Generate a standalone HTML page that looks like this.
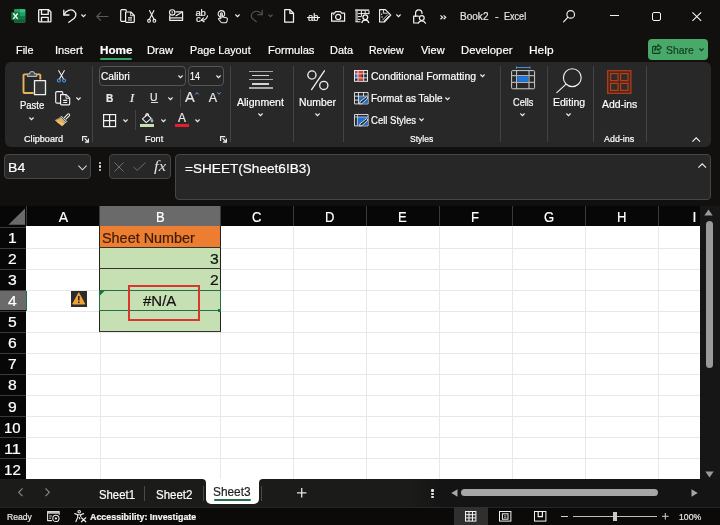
<!DOCTYPE html>
<html lang="en"><head><meta charset="utf-8"><title>Book2 - Excel</title>
<style>
html,body{margin:0;padding:0;background:#12100e;}
body{width:720px;height:525px;overflow:hidden;font-family:"Liberation Sans",sans-serif;}
#app{will-change:transform;position:relative;width:720px;height:525px;overflow:hidden;background:#12100e;}
.t{position:absolute;white-space:pre;-webkit-text-stroke:0.2px currentColor;line-height:1;transform-origin:0 0;display:inline-block;}
.a{position:absolute;}
svg{position:absolute;overflow:visible;}
.sep{position:absolute;width:1px;background:#444;top:66px;height:76px;}
.chev{position:absolute;}
.gl-h{position:absolute;left:26px;width:674px;height:1px;background:#e8e8e8;}
.gl-v{position:absolute;top:226.4px;width:1px;height:253px;background:#e8e8e8;}
.rh{position:absolute;left:0;width:26px;height:1px;background:#3a3a3a;}
.chs{position:absolute;top:206px;width:1px;height:20px;background:#3a3a3a;}
.sf{font-family:"Liberation Serif",serif;}

</style></head>
<body>
<div id="app">
<!-- ribbon panel -->
<div class="a" style="left:4.5px;top:61.9px;width:706.5px;height:85.5px;background:#282828;border-radius:6px;"></div>
<!-- Home underline -->
<div class="a" style="left:100px;top:58px;width:32px;height:2px;background:#2fa866;border-radius:1px;"></div>
<!-- Share button -->
<div class="a" style="left:648px;top:39px;width:59.5px;height:21px;background:#49a968;border-radius:4px;"></div>
<!-- group separators -->
<div class="sep" style="left:92px"></div>
<div class="sep" style="left:230px"></div>
<div class="sep" style="left:292.5px"></div>
<div class="sep" style="left:343px"></div>
<div class="sep" style="left:500px"></div>
<div class="sep" style="left:546.5px"></div>
<div class="sep" style="left:592.5px"></div>
<div class="sep" style="left:645.5px"></div>
<!-- font boxes -->
<div class="a" style="left:99.2px;top:65.8px;width:86.4px;height:20.2px;border:1px solid #555;border-radius:4px;box-sizing:border-box;background:#262626"></div>
<div class="a" style="left:187.6px;top:65.8px;width:36.6px;height:20.2px;border:1px solid #555;border-radius:4px;box-sizing:border-box;background:#262626"></div>
<!-- small separators in font group -->
<div class="a" style="left:179.5px;top:89px;width:1px;height:18px;background:#444"></div>
<div class="a" style="left:134.5px;top:110px;width:1px;height:20px;background:#444"></div>
<!-- U underline -->
<div class="a" style="left:150.6px;top:102.2px;width:7px;height:1px;background:#e0e0e0"></div>
<!-- fill color bar / font color bar -->
<div class="a" style="left:140px;top:123.5px;width:14.3px;height:3.5px;background:#c6e0b4"></div>
<div class="a" style="left:175.3px;top:123.5px;width:14px;height:3.5px;background:#e3202a"></div>

<!-- formula bar -->
<div class="a" style="left:4px;top:154px;width:87px;height:25px;border:1px solid #464646;border-radius:4px;box-sizing:border-box;background:#272727"></div>
<div class="a" style="left:108.5px;top:154px;width:62.5px;height:25px;border:1px solid #464646;border-radius:4px;box-sizing:border-box;background:#272727"></div>
<div class="a" style="left:174.5px;top:154px;width:536.5px;height:45.5px;border:1px solid #464646;border-radius:4px;box-sizing:border-box;background:#272727"></div>

<!-- grid -->
<div class="a" style="left:0;top:206px;width:700px;height:273.4px;background:#070707"></div>
<div class="a" style="left:26px;top:226.4px;width:674px;height:253px;background:#fff"></div>
<!-- selected col header B -->
<div class="a" style="left:99.5px;top:206px;width:121px;height:20.4px;background:#6a6a6a"></div>
<!-- selected row header 4 -->
<div class="a" style="left:0;top:289.8px;width:26px;height:20.6px;background:#6a6a6a"></div><div class="a" style="left:25.5px;top:289.6px;width:1px;height:21px;background:#1e7145"></div>
<div class="gl-h" style="top:247.67px"></div>
<div class="gl-h" style="top:268.74px"></div>
<div class="gl-h" style="top:289.81px"></div>
<div class="gl-h" style="top:310.88px"></div>
<div class="gl-h" style="top:331.95px"></div>
<div class="gl-h" style="top:353.02px"></div>
<div class="gl-h" style="top:374.09px"></div>
<div class="gl-h" style="top:395.16px"></div>
<div class="gl-h" style="top:416.23px"></div>
<div class="gl-h" style="top:437.30px"></div>
<div class="gl-h" style="top:458.37px"></div>
<div class="gl-v" style="left:99.5px"></div>
<div class="gl-v" style="left:220px"></div>
<div class="gl-v" style="left:293px"></div>
<div class="gl-v" style="left:366px"></div>
<div class="gl-v" style="left:439px"></div>
<div class="gl-v" style="left:512px"></div>
<div class="gl-v" style="left:585px"></div>
<div class="gl-v" style="left:658px"></div>
<div class="rh" style="top:226.60px"></div>
<div class="rh" style="top:247.67px"></div>
<div class="rh" style="top:268.74px"></div>
<div class="rh" style="top:289.81px"></div>
<div class="rh" style="top:310.88px"></div>
<div class="rh" style="top:331.95px"></div>
<div class="rh" style="top:353.02px"></div>
<div class="rh" style="top:374.09px"></div>
<div class="rh" style="top:395.16px"></div>
<div class="rh" style="top:416.23px"></div>
<div class="rh" style="top:437.30px"></div>
<div class="rh" style="top:458.37px"></div>
<div class="rh" style="top:479.44px"></div>
<div class="chs" style="left:26px"></div>
<div class="chs" style="left:99px"></div>
<div class="chs" style="left:220px"></div>
<div class="chs" style="left:293px"></div>
<div class="chs" style="left:366px"></div>
<div class="chs" style="left:439px"></div>
<div class="chs" style="left:512px"></div>
<div class="chs" style="left:585px"></div>
<div class="chs" style="left:658px"></div>
<!-- cells -->
<div class="a" style="left:99.5px;top:226.4px;width:121px;height:21.2px;background:#ed7d31"></div>
<div class="a" style="left:99.5px;top:247.5px;width:121px;height:84.3px;background:#c6e0b4"></div>
<div class="a" style="left:99px;top:226.4px;width:1px;height:105.6px;background:#222"></div>
<div class="a" style="left:220px;top:226.4px;width:1px;height:105.6px;background:#222"></div>
<div class="a" style="left:99px;top:247.2px;width:122px;height:1px;background:#333"></div>
<div class="a" style="left:99px;top:268.2px;width:122px;height:1px;background:#333"></div>
<div class="a" style="left:99px;top:331.3px;width:122px;height:1px;background:#333"></div>
<!-- selection border B4 -->
<div class="a" style="left:99px;top:289.6px;width:122px;height:21.6px;border:1px solid #1e7145;box-sizing:border-box"></div>
<div class="a" style="left:218.3px;top:309px;width:3.2px;height:3.4px;background:#1e7145"></div>
<svg style="left:100px;top:291px" width="5" height="5" viewBox="0 0 5 5"><path d="M0 0H4.5L0 4.5Z" fill="#1e7145"/></svg>
<!-- red highlight rect -->
<div class="a" style="left:127.5px;top:285.4px;width:72.5px;height:35.2px;border:2.5px solid #d9362e;box-sizing:border-box"></div>
<!-- warning icon -->
<div class="a" style="left:70.5px;top:290.5px;width:16.5px;height:16.5px;background:#2c2c2c"></div>
<svg style="left:72px;top:292px" width="13.5" height="13" viewBox="0 0 27 26"><path d="M13.5 1.5L25.5 24H1.5Z" fill="#f0a33a" stroke="#f0a33a" stroke-width="2" stroke-linejoin="round"/><rect x="12" y="8" width="3.2" height="9" fill="#2c2c2c"/><rect x="12" y="19" width="3.2" height="3.2" fill="#2c2c2c"/></svg>
<!-- select-all triangle -->
<svg style="left:7.6px;top:207.8px" width="18" height="18" viewBox="0 0 18 18"><path d="M17 0.6V16.8H0.4Z" fill="#6a6a6a"/></svg>

<!-- vertical scrollbar -->
<div class="a" style="left:700px;top:206px;width:20px;height:273.4px;background:#161616"></div>
<div class="a" style="left:705.5px;top:220.6px;width:7.2px;height:147px;background:#9a9a9a;border-radius:3.6px"></div>
<svg style="left:704.4px;top:209.4px" width="9" height="7" viewBox="0 0 9 7"><path d="M4.5 0.5L8.7 6.5H0.3Z" fill="#9a9a9a"/></svg>
<svg style="left:704.8px;top:470.5px" width="9" height="7" viewBox="0 0 9 7"><path d="M4.5 6.5L8.7 0.5H0.3Z" fill="#9a9a9a"/></svg>

<!-- sheet tab bar -->
<div class="a" style="left:202.3px;top:479px;width:60.9px;height:6px;background:#fff"></div>
<div class="a" style="left:0;top:479.3px;width:206.3px;height:28px;background:#1b1c19;border-radius:0 4px 0 0"></div>
<div class="a" style="left:259.2px;top:479.3px;width:460.8px;height:28px;background:#1b1c19;border-radius:4px 0 0 0"></div>
<div class="a" style="left:200px;top:490px;width:66px;height:17.5px;background:#1b1c19"></div>
<div class="a" style="left:206.3px;top:479px;width:52.9px;height:25px;background:#fff;border-radius:0 0 5px 5px"></div>
<div class="a" style="left:214.2px;top:499.3px;width:36.6px;height:2px;background:#217346;border-radius:1px"></div>
<div class="a" style="left:144.2px;top:485.5px;width:1px;height:15px;background:#4a4a4a"></div>
<div class="a" style="left:203px;top:485.5px;width:1px;height:15px;background:#4a4a4a"></div>
<div class="a" style="left:261px;top:485.5px;width:1px;height:15px;background:#4a4a4a"></div>
<!-- hscroll -->
<div class="a" style="left:410px;top:479.3px;width:310px;height:28px;background:linear-gradient(90deg,#1b1c19 0,#141414 30px,#141414 100%)"></div>
<div class="a" style="left:460.8px;top:489.2px;width:197px;height:7px;background:#a6a6a6;border-radius:3.5px"></div>
<svg style="left:450.5px;top:489px" width="7" height="8" viewBox="0 0 7 8"><path d="M0.3 4L6.5 0.3V7.7Z" fill="#a6a6a6"/></svg>
<svg style="left:691px;top:489px" width="7" height="8" viewBox="0 0 7 8"><path d="M6.7 4L0.5 0.3V7.7Z" fill="#a6a6a6"/></svg>
<!-- status bar -->
<div class="a" style="left:0;top:507px;width:720px;height:18px;background:#0b0a09;border-top:1px solid #262626;box-sizing:border-box"></div>
<div class="a" style="left:453.8px;top:507px;width:34.2px;height:18px;background:#2f2f2f"></div>
<div class="a" style="left:573px;top:516.3px;width:84px;height:1px;background:#bdbdbd"></div>
<div class="a" style="left:613px;top:511.7px;width:4px;height:9.5px;background:#c8c8c8"></div>
<!-- ===== title bar icons ===== -->
<!-- excel logo -->
<svg style="left:10.8px;top:9.2px" width="15" height="13.7" viewBox="0 0 30 27.4">
 <path d="M8.4 0H26.8a1.8 1.8 0 0 1 1.8 1.8V25.6a1.8 1.8 0 0 1-1.8 1.8H8.4a1.8 1.8 0 0 1-1.8-1.8V1.8A1.8 1.8 0 0 1 8.4 0Z" fill="#1d9a58"/>
 <rect x="6.6" y="0.4" width="11" height="6.6" fill="#21a366"/><rect x="17.6" y="0.4" width="11" height="6.6" fill="#33c481" rx="1"/>
 <rect x="6.6" y="7" width="11" height="6.8" fill="#107c41"/><rect x="17.6" y="7" width="11" height="6.8" fill="#21a366"/>
 <rect x="6.6" y="13.8" width="11" height="6.8" fill="#185c37"/><rect x="17.6" y="13.8" width="11" height="6.8" fill="#107c41"/>
 <rect x="6.6" y="20.6" width="22" height="6.4" fill="#185c37" rx="1"/>
 <rect x="0.6" y="6" width="16.8" height="16.4" rx="1.6" fill="#107c41"/>
 <path d="M4.6 8.8L13.4 19.8M13.4 8.8L4.6 19.8" stroke="#fff" stroke-width="2.7"/>
</svg>
<!-- save -->
<svg style="left:38.3px;top:8.9px" width="13.6" height="13.6" viewBox="0 0 13.6 13.6" fill="none" stroke="#f2f2f2" stroke-width="1.35" stroke-linejoin="round">
 <path d="M1.4 0.7H10.6L12.9 3V12.2a0.7 0.7 0 0 1-0.7 0.7H1.4a0.7 0.7 0 0 1-0.7-0.7V1.4a0.7 0.7 0 0 1 0.7-0.7Z"/>
 <path d="M3.5 0.9V5.4H10.2V0.9"/><path d="M3.5 12.8V8.4H10.2V12.8"/>
</svg>
<!-- undo -->
<svg style="left:63.4px;top:9px" width="14" height="14" viewBox="0 0 14 14" fill="none" stroke="#f2f2f2" stroke-width="1.3" stroke-linecap="round" stroke-linejoin="round">
 <path d="M0.8 1.1V6H6"/><path d="M1 5.8C3 1.6 7.8 -0.4 10.9 2 13.9 4.4 13 7.6 11 9.4L5.8 13.3"/>
</svg>
<svg class="chev" style="left:81.2px;top:14.2px" width="5" height="3.4" viewBox="0 0 5 3.4" fill="none" stroke="#f2f2f2" stroke-width="1.1"><path d="M0.4 0.5L2.5 2.7L4.6 0.5"/></svg>
<!-- back arrow (disabled) -->
<svg style="left:95.8px;top:11.5px" width="12.6" height="9" viewBox="0 0 12.6 9" fill="none" stroke="#5a5a5a" stroke-width="1.1" stroke-linecap="round" stroke-linejoin="round"><path d="M12 4.5H0.8M4.6 0.7L0.8 4.5L4.6 8.3"/></svg>
<!-- copy -->
<svg style="left:119.6px;top:8.6px" width="15" height="14" viewBox="0 0 15 14" fill="none" stroke="#f2f2f2" stroke-width="1.2" stroke-linejoin="round">
 <path d="M5.2 12.4H1.9A1.2 1.2 0 0 1 0.7 11.2V1.9A1.2 1.2 0 0 1 1.9 0.7H5.2A1.2 1.2 0 0 1 6.4 1.9V2.6"/>
 <path d="M5.6 3H10.8L14.3 6.5V12.6a0.8 0.8 0 0 1-0.8 0.8H6.4a0.8 0.8 0 0 1-0.8-0.8Z"/>
 <path d="M10.6 3.2V6.7H14.1" stroke-width="0.9"/>
 <path d="M8 8.8H12M8 11H12"/>
</svg>
<!-- scissors -->
<svg style="left:146.8px;top:10px" width="9.4" height="12.6" viewBox="0 0 9.4 12.6" fill="none" stroke="#f2f2f2" stroke-width="1.1" stroke-linecap="round">
 <path d="M2.5 0.6L7.1 9.4M6.9 0.6L2.3 9.4"/><circle cx="2" cy="10.8" r="1.4"/><circle cx="7.4" cy="10.8" r="1.4"/>
</svg>
<!-- email -->
<svg style="left:168.9px;top:9px" width="14.2" height="12" viewBox="0 0 14.2 12" fill="none" stroke="#f2f2f2" stroke-width="1.2" stroke-linejoin="round">
 <path d="M0.7 6.2V11.3H13.6V2.8H6.4"/><path d="M6.6 7L13.4 3"/><path d="M0.9 8.9H13.4"/>
 <circle cx="3.2" cy="3.4" r="2.7" stroke-width="1.1"/><path d="M3.2 2.2V4.4" stroke-width="1"/>
</svg>
<!-- abc spelling -->
<svg style="left:195.8px;top:10.3px" width="12" height="12.4" viewBox="0 0 12 12.4" fill="none" stroke="#f2f2f2" stroke-width="1.1" stroke-linecap="round" stroke-linejoin="round">
 <path d="M11.5 5.8C10.8 8.6 8.8 10.3 5.4 10.1"/><path d="M7.6 7.8L5.2 10.1L8.2 11.7"/>
</svg>
<span class="t" style="left:195.5px;top:7.9px;font-size:9.6px;color:#f2f2f2;letter-spacing:-0.3px">ab</span>
<span class="t" style="left:195.9px;top:14.1px;font-size:9.6px;color:#f2f2f2">c</span>
<!-- touch -->
<svg style="left:216.5px;top:9.6px" width="11.2" height="13.4" viewBox="0 0 11.2 13.4" fill="none" stroke="#f2f2f2" stroke-width="1.05" stroke-linecap="round" stroke-linejoin="round">
 <circle cx="4.4" cy="3.9" r="3.3"/>
 <path d="M3.4 8.8V3.7a1 1 0 0 1 2 0V6.9L9.4 7.8a1.3 1.3 0 0 1 1 1.5L9.9 11.6a1.6 1.6 0 0 1-1.6 1.2H5.4a2 2 0 0 1-1.6-.8L1.6 9.3c-.5-.8.6-1.5 1.2-.9Z" fill="#12100e"/><rect x="3.7" y="3.4" width="1.4" height="5" fill="#b0b0b0" stroke="none"/>
</svg>
<svg class="chev" style="left:234.7px;top:14.2px" width="5" height="3.4" viewBox="0 0 5 3.4" fill="none" stroke="#f2f2f2" stroke-width="1.1"><path d="M0.4 0.5L2.5 2.7L4.6 0.5"/></svg>
<!-- redo disabled -->
<svg style="left:250px;top:9.2px" width="13" height="13.4" viewBox="0 0 13 13.4" fill="none" stroke="#555" stroke-width="1.1" stroke-linecap="round" stroke-linejoin="round">
 <path d="M12.2 1V5.8H7.4"/><path d="M12 5.7C9.9 2.6 6.3 1.4 3.5 3.1 0.9 4.8 0.7 7.8 2.5 9.7L6.3 12.8"/>
</svg>
<svg class="chev" style="left:267.5px;top:14.2px" width="5" height="3.4" viewBox="0 0 5 3.4" fill="none" stroke="#555" stroke-width="1.1"><path d="M0.4 0.5L2.5 2.7L4.6 0.5"/></svg>
<!-- new doc -->
<svg style="left:283.8px;top:9px" width="10.2" height="14" viewBox="0 0 10.2 14" fill="none" stroke="#f2f2f2" stroke-width="1.25" stroke-linejoin="round">
 <path d="M0.7 0.7H6L9.5 4.2V13.2H0.7Z"/><path d="M5.9 0.9V4.4H9.4"/>
</svg>
<!-- strikethrough ab -->
<div class="a" style="left:306.7px;top:16.8px;width:13.4px;height:1.15px;background:#f2f2f2"></div>
<!-- camera -->
<svg style="left:330.8px;top:10.5px" width="14.2" height="10.8" viewBox="0 0 14.2 10.8" fill="none" stroke="#f2f2f2" stroke-width="1.2" stroke-linejoin="round">
 <path d="M0.6 2.2H3.6L4.7 0.6H9.5L10.6 2.2H13.6V10.2H0.6Z"/><circle cx="7.2" cy="5.9" r="2.6"/><circle cx="2.8" cy="3.6" r="0.4" fill="#f2f2f2" stroke-width="0.5"/>
</svg>
<!-- table + person -->
<svg style="left:355px;top:9px" width="14.6" height="14.2" viewBox="0 0 14.6 14.2" fill="none" stroke="#f2f2f2" stroke-width="1.05" stroke-linejoin="round">
 <rect x="0.3" y="0.3" width="2.5" height="12.6" fill="#9a9a9a" stroke="none"/>
 <rect x="0.3" y="0.3" width="13.9" height="1.7" fill="#c8c8c8" stroke="none"/>
 <path d="M2.8 4.6H14M2.8 7.6H6.4M2.8 10.4H5.6M6.4 2V7.6M10.2 2V4.6M14 2V5.2" stroke-width="1"/>
 <path d="M0.5 12.8H5.4" stroke-width="1"/>
 <circle cx="10.3" cy="8.3" r="2.4" stroke-width="1.25"/><path d="M6.7 14C7.2 11.9 8.5 11.1 10.3 11.1 12.1 11.1 13.4 11.9 13.9 14" stroke-width="1.25"/>
</svg>
<!-- page arrow -->
<svg style="left:379px;top:9.3px" width="12.4" height="13.6" viewBox="0 0 12.4 13.6" fill="none" stroke="#f2f2f2" stroke-width="1.15" stroke-linejoin="round">
 <path d="M0.6 0.6H6.4L11.8 6.2L5.4 13H0.6Z"/><path d="M4.4 0.8V4.2H8.6" stroke-width="0.9"/><path d="M10.4 6.6L4.6 12.4M9.2 5.4L3.4 11.2" stroke-width="0.9"/><path d="M2.6 5.2h.1M3 8h.1" stroke-width="1.3" stroke-linecap="round"/>
</svg>
<svg class="chev" style="left:396.3px;top:14.2px" width="5" height="3.4" viewBox="0 0 5 3.4" fill="none" stroke="#f2f2f2" stroke-width="1.1"><path d="M0.4 0.5L2.5 2.7L4.6 0.5"/></svg>
<!-- lock + person -->
<svg style="left:412.6px;top:8.6px" width="13.4" height="14.8" viewBox="0 0 13.4 14.8" fill="none" stroke="#f2f2f2" stroke-width="1.2" stroke-linejoin="round" stroke-linecap="round">
 <path d="M2.6 7.2V4a3.2 3.2 0 0 1 6.4 0V4.4"/><path d="M4.8 14H0.7V7.2H5.4"/>
 <circle cx="8.8" cy="9.1" r="2.4"/><path d="M5.4 14.2C5.9 12.4 7.1 11.8 8.8 11.8 10.5 11.8 11.7 12.4 12.5 14.2"/>
</svg>
<!-- >> -->
<svg style="left:440px;top:14.6px" width="6.4" height="4.6" viewBox="0 0 6.4 4.6" fill="none" stroke="#ececec" stroke-width="1.2"><path d="M0.5 0.4L2.6 2.3L0.5 4.2M3.6 0.4L5.7 2.3L3.6 4.2"/></svg>
<!-- search -->
<svg style="left:562.6px;top:9.8px" width="12" height="12.2" viewBox="0 0 12 12.2" fill="none" stroke="#f2f2f2" stroke-width="1.15" stroke-linecap="round"><circle cx="7.7" cy="4.4" r="3.8"/><path d="M5 7.2L0.6 11.8"/></svg>
<!-- window controls -->
<div class="a" style="left:610.4px;top:14.9px;width:9px;height:1.1px;background:#f2f2f2"></div>
<div class="a" style="left:651.5px;top:12px;width:9.4px;height:9.2px;border:1.1px solid #f2f2f2;border-radius:2px;box-sizing:border-box"></div>
<svg style="left:692.2px;top:12px" width="9.6" height="9.2" viewBox="0 0 9.6 9.2" fill="none" stroke="#f2f2f2" stroke-width="1.1"><path d="M0.4 0.4L9.2 8.8M9.2 0.4L0.4 8.8"/></svg>

<!-- share icon -->
<svg style="left:652px;top:44.4px" width="10" height="10" viewBox="0 0 10 10" fill="none" stroke="#0f3d20" stroke-width="1.1" stroke-linejoin="round" stroke-linecap="round">
 <path d="M3.4 2.4H1.6A1 1 0 0 0 0.6 3.4V8.4A1 1 0 0 0 1.6 9.4H7A1 1 0 0 0 8 8.4V7.6"/>
 <path d="M6 0.6L9.4 3.6L6 6.6V4.8C4.4 4.8 3.4 5.4 2.8 6.6 2.8 4.2 4 2.6 6 2.4Z"/>
</svg>
<svg class="chev" style="left:698.7px;top:47.9px" width="5" height="3.4" viewBox="0 0 5 3.4" fill="none" stroke="#0f3d20" stroke-width="1.1"><path d="M0.4 0.5L2.5 2.7L4.6 0.5"/></svg>

<!-- ===== ribbon icons ===== -->
<!-- paste -->
<svg style="left:22px;top:69px" width="25" height="27" viewBox="0 0 25 27" fill="none" stroke-linejoin="round">
 <path d="M11.6 24H2.4A0.9 0.9 0 0 1 1.5 23.1V6.3A0.9 0.9 0 0 1 2.4 5.4H17.4A0.9 0.9 0 0 1 18.3 6.3V10.6" stroke="#e8b35a" stroke-width="1.9"/>
 <path d="M5.6 7.4V5H7.6A2.5 2.5 0 0 1 12.6 5H14.6V7.4Z" fill="#4a4a4a" stroke="#b4b4b4" stroke-width="1.1"/>
 <rect x="12.5" y="11.7" width="11" height="14" fill="#363636" stroke="#f0f0f0" stroke-width="1.3"/>
</svg>
<svg class="chev" style="left:29.2px;top:117.1px" width="5" height="3.4" viewBox="0 0 5 3.4" fill="none" stroke="#f2f2f2" stroke-width="1.1"><path d="M0.4 0.5L2.5 2.7L4.6 0.5"/></svg>
<!-- cut -->
<svg style="left:57.4px;top:70.3px" width="9" height="12.6" viewBox="0 0 9 12.6" fill="none" stroke-width="1.05" stroke-linecap="round">
 <path d="M1.6 0.6L6.4 8.8M7.4 0.6L2.6 8.8" stroke="#f2f2f2"/><circle cx="1.9" cy="10.5" r="1.5" stroke="#4a9be8"/><circle cx="7.1" cy="10.5" r="1.5" stroke="#4a9be8"/>
</svg>
<!-- copy -->
<svg style="left:54.5px;top:90.6px" width="15.4" height="14.6" viewBox="0 0 15.4 14.6" fill="none" stroke="#f2f2f2" stroke-width="1.15" stroke-linejoin="round">
 <path d="M5.2 12.2H1.9A1.2 1.2 0 0 1 0.7 11V1.8A1.2 1.2 0 0 1 1.9 0.6H6.6A1.2 1.2 0 0 1 7.8 1.8V3.2"/>
 <path d="M5.6 3.6H11.2L14.7 7.1V13a0.9 0.9 0 0 1-0.9 0.9H6.5a0.9 0.9 0 0 1-0.9-0.9Z"/>
 <path d="M11 3.8V7.3H14.5" stroke-width="0.9"/>
 <path d="M8.2 9.4H12.2M8.2 11.5H12.2"/>
</svg>
<svg class="chev" style="left:75.5px;top:97px" width="5" height="3.4" viewBox="0 0 5 3.4" fill="none" stroke="#f2f2f2" stroke-width="1.1"><path d="M0.4 0.5L2.5 2.7L4.6 0.5"/></svg>
<!-- format painter -->
<svg style="left:55px;top:113.2px" width="15" height="13.4" viewBox="0 0 15 13.4" fill="none" stroke-linejoin="round" stroke-linecap="round">
 <path d="M9.4 4.6L12.7 1.2a1.1 1.1 0 0 1 1.6 1.6L11 6.2" stroke="#f2f2f2" stroke-width="1.05"/>
 <path d="M6.8 3.6L11.8 8.6L10.9 9.6L5.8 4.6Z" fill="#292929" stroke="#f2f2f2" stroke-width="1"/>
 <path d="M5.3 5.2L10.2 10.1L7 13L0.6 7.6Z" fill="#e8b35a" stroke="#e8b35a" stroke-width="0.8"/>
 <path d="M2.6 8.9L8.4 11.4" stroke="#f6d9a0" stroke-width="0.9"/>
</svg>
<!-- dialog launchers -->
<svg style="left:82.2px;top:136.2px" width="7" height="6.6" viewBox="0 0 7 6.6" fill="none" stroke="#f0f0f0" stroke-width="1.15"><path d="M0.6 5V0.6H5.2"/><path d="M2.6 2.4L6.2 6M6.4 2.6V6.1H2.9"/></svg>
<svg style="left:220.2px;top:136.2px" width="7" height="6.6" viewBox="0 0 7 6.6" fill="none" stroke="#f0f0f0" stroke-width="1.15"><path d="M0.6 5V0.6H5.2"/><path d="M2.6 2.4L6.2 6M6.4 2.6V6.1H2.9"/></svg>
<!-- font dropdown chevrons -->
<svg class="chev" style="left:177.7px;top:74.6px" width="5" height="3.4" viewBox="0 0 5 3.4" fill="none" stroke="#f2f2f2" stroke-width="1.1"><path d="M0.4 0.5L2.5 2.7L4.6 0.5"/></svg>
<svg class="chev" style="left:216px;top:74.6px" width="5" height="3.4" viewBox="0 0 5 3.4" fill="none" stroke="#f2f2f2" stroke-width="1.1"><path d="M0.4 0.5L2.5 2.7L4.6 0.5"/></svg>
<svg class="chev" style="left:167.7px;top:96.8px" width="5" height="3.4" viewBox="0 0 5 3.4" fill="none" stroke="#f2f2f2" stroke-width="1.1"><path d="M0.4 0.5L2.5 2.7L4.6 0.5"/></svg>
<svg class="chev" style="left:123.3px;top:118.8px" width="5" height="3.4" viewBox="0 0 5 3.4" fill="none" stroke="#f2f2f2" stroke-width="1.1"><path d="M0.4 0.5L2.5 2.7L4.6 0.5"/></svg>
<svg class="chev" style="left:160.5px;top:118.8px" width="5" height="3.4" viewBox="0 0 5 3.4" fill="none" stroke="#f2f2f2" stroke-width="1.1"><path d="M0.4 0.5L2.5 2.7L4.6 0.5"/></svg>
<svg class="chev" style="left:195.2px;top:118.8px" width="5" height="3.4" viewBox="0 0 5 3.4" fill="none" stroke="#f2f2f2" stroke-width="1.1"><path d="M0.4 0.5L2.5 2.7L4.6 0.5"/></svg>
<!-- grow/shrink carets -->
<svg style="left:194.6px;top:92px" width="4" height="2.8" viewBox="0 0 4 2.8" fill="none" stroke="#5aa7e6" stroke-width="1"><path d="M0.3 2.5L2 0.6L3.7 2.5"/></svg>
<svg style="left:217.2px;top:92.2px" width="4" height="2.8" viewBox="0 0 4 2.8" fill="none" stroke="#5aa7e6" stroke-width="1"><path d="M0.3 0.4L2 2.3L3.7 0.4"/></svg>
<!-- borders -->
<svg style="left:103px;top:113.5px" width="13.2" height="13.2" viewBox="0 0 13.2 13.2" fill="none" stroke="#f2f2f2" stroke-width="1.2"><rect x="0.6" y="0.6" width="12" height="12"/><path d="M6.6 0.6V12.6M0.6 6.6H12.6"/></svg>
<!-- fill bucket -->
<svg style="left:141px;top:113px" width="13" height="10.4" viewBox="0 0 13 10.4" fill="none" stroke="#f2f2f2" stroke-width="1.05" stroke-linejoin="round" stroke-linecap="round">
 <path d="M6.4 1.6L10.2 5.4L5.2 9.7L1.4 5.9Z"/><path d="M4.6 3.4C4.4 1.4 5.6 0.4 6.6 0.7 7.6 1 7.8 2 7.4 2.7"/>
 <path d="M10.9 5.6c.8 1.1 1.3 1.8 1.3 2.5a1.2 1.2 0 0 1-2.4 0c0-.7.4-1.4 1.1-2.5Z" fill="#9fb4c8" stroke="#9fb4c8" stroke-width="0.4"/>
</svg>
<!-- alignment -->
<div class="a" style="left:249px;top:70.6px;width:24.2px;height:1.5px;background:#a6a6a6"></div>
<div class="a" style="left:252px;top:74.7px;width:17.4px;height:1.5px;background:#d4d4d4"></div>
<div class="a" style="left:249px;top:78.9px;width:24.2px;height:1.5px;background:#a6a6a6"></div>
<div class="a" style="left:252px;top:83.0px;width:17.4px;height:1.5px;background:#d4d4d4"></div>
<div class="a" style="left:249px;top:87.2px;width:24.2px;height:1.5px;background:#a6a6a6"></div>
<svg class="chev" style="left:258.1px;top:113.4px" width="5" height="3.4" viewBox="0 0 5 3.4" fill="none" stroke="#f2f2f2" stroke-width="1.1"><path d="M0.4 0.5L2.5 2.7L4.6 0.5"/></svg>
<!-- percent -->
<svg style="left:307.2px;top:70px" width="21.8" height="20.4" viewBox="0 0 21.8 20.4" fill="none" stroke="#f2f2f2" stroke-width="1.3" stroke-linecap="round"><circle cx="4.9" cy="5" r="4.1"/><circle cx="16.8" cy="15.4" r="4.1"/><path d="M17.4 0.8L4.6 19.6"/></svg>
<svg class="chev" style="left:315.1px;top:113.4px" width="5" height="3.4" viewBox="0 0 5 3.4" fill="none" stroke="#f2f2f2" stroke-width="1.1"><path d="M0.4 0.5L2.5 2.7L4.6 0.5"/></svg>
<!-- conditional formatting -->
<svg style="left:354px;top:69.8px" width="14" height="11.8" viewBox="0 0 14 11.8" fill="none" stroke="#ececec" stroke-width="1">
 <rect x="0.5" y="0.5" width="13" height="10.8" fill="#2a2a2a"/>
 <rect x="1" y="1" width="8.4" height="2.6" fill="#e23a30" stroke="none"/>
 <rect x="4.3" y="4" width="3.4" height="3.6" fill="#e23a30" stroke="none"/>
 <rect x="1.4" y="4" width="2.6" height="3.6" fill="#3f7fe0" stroke="none"/>
 <rect x="4.3" y="8.2" width="5.1" height="2.6" fill="#e23a30" stroke="none"/>
 <path d="M4 0.5V11.3M9.7 0.5V11.3M0.5 3.8H13.5M0.5 7.9H13.5" stroke-width="0.9"/>
</svg>
<svg class="chev" style="left:479.7px;top:74.4px" width="5" height="3.4" viewBox="0 0 5 3.4" fill="none" stroke="#f2f2f2" stroke-width="1.1"><path d="M0.4 0.5L2.5 2.7L4.6 0.5"/></svg>
<!-- format as table -->
<svg style="left:353.8px;top:92.2px" width="14.6" height="12.4" viewBox="0 0 14.6 12.4" fill="none" stroke="#e8e8e8" stroke-width="0.9" stroke-linejoin="round">
 <rect x="0.5" y="0.5" width="13.6" height="11.4"/>
 <path d="M4.5 0.5V11.9M9.5 0.5V4M0.5 4.2H14.1M0.5 8.1H5"/>
 <rect x="5" y="4.7" width="8.8" height="6.8" fill="#1f6fd2" stroke="none"/>
 <path d="M12.6 4.6L14 6L8 11.6L5.6 12L6 9.8Z" fill="#2a2a2a" stroke="#e8e8e8" stroke-width="0.9"/>
</svg>
<svg class="chev" style="left:445.3px;top:96.6px" width="5" height="3.4" viewBox="0 0 5 3.4" fill="none" stroke="#f2f2f2" stroke-width="1.1"><path d="M0.4 0.5L2.5 2.7L4.6 0.5"/></svg>
<!-- cell styles -->
<svg style="left:353.8px;top:114.4px" width="14.6" height="12.4" viewBox="0 0 14.6 12.4" fill="none" stroke="#e8e8e8" stroke-width="0.9" stroke-linejoin="round">
 <rect x="0.5" y="0.5" width="13.6" height="11.4"/>
 <rect x="3.4" y="3" width="10.2" height="8.4" fill="#1f6fd2" stroke="none"/>
 <path d="M3.4 0.5V11.9M0.5 3H14.1" stroke="#cfe0f4" stroke-width="0.8"/>
 <path d="M12.6 4.6L14 6L8 11.6L5.6 12L6 9.8Z" fill="#2a2a2a" stroke="#e8e8e8" stroke-width="0.9"/>
</svg>
<svg class="chev" style="left:419.3px;top:118.4px" width="5" height="3.4" viewBox="0 0 5 3.4" fill="none" stroke="#f2f2f2" stroke-width="1.1"><path d="M0.4 0.5L2.5 2.7L4.6 0.5"/></svg>
<!-- cells -->
<svg style="left:511px;top:66px" width="24.2" height="23.4" viewBox="0 0 24.2 23.4" fill="none" stroke="#cfcfcf" stroke-width="1">
 <path d="M5.4 1.6H18.9M5.4 0.4V2.8M18.9 0.4V2.8" stroke="#4a98e8"/>
 <rect x="0.6" y="4.6" width="23" height="18.2" rx="1"/>
 <path d="M5.6 4.6V22.8M18 4.6V22.8"/>
 <path d="M0.6 9.6H23.6M0.6 16.4H23.6" stroke="#b0b0b0" stroke-width="1.3"/>
 <rect x="6.3" y="10.2" width="11" height="5.6" fill="#1f78d8" stroke="none"/>
</svg>
<svg class="chev" style="left:520.4px;top:113.4px" width="5" height="3.4" viewBox="0 0 5 3.4" fill="none" stroke="#f2f2f2" stroke-width="1.1"><path d="M0.4 0.5L2.5 2.7L4.6 0.5"/></svg>
<!-- editing -->
<svg style="left:556px;top:67.6px" width="26" height="25.4" viewBox="0 0 26 25.4" fill="none" stroke="#f2f2f2" stroke-width="1.1" stroke-linecap="round"><circle cx="16.3" cy="9.7" r="8.9"/><path d="M9.8 16.4L0.8 24.6"/></svg>
<svg class="chev" style="left:565.9px;top:113.4px" width="5" height="3.4" viewBox="0 0 5 3.4" fill="none" stroke="#f2f2f2" stroke-width="1.1"><path d="M0.4 0.5L2.5 2.7L4.6 0.5"/></svg>
<!-- add-ins -->
<svg style="left:607.3px;top:70px" width="24.6" height="24" viewBox="0 0 24.6 24" fill="none" stroke="#b5401d" stroke-width="1.2">
 <rect x="0.7" y="0.7" width="23.2" height="22.6" fill="#55251a"/>
 <rect x="3.6" y="3.6" width="7.4" height="7" fill="#322b29"/><rect x="13.6" y="3.6" width="7.4" height="7" fill="#322b29"/><rect x="3.6" y="13.4" width="7.4" height="7" fill="#322b29"/><rect x="13.6" y="13.4" width="7.4" height="7" fill="#322b29"/>
</svg>
<!-- collapse ribbon -->
<svg style="left:691.7px;top:136.6px" width="8.4" height="5" viewBox="0 0 8.4 5" fill="none" stroke="#f2f2f2" stroke-width="1.1"><path d="M0.4 4.6L4.2 0.8L8 4.6"/></svg>

<!-- ===== formula bar icons ===== -->
<svg style="left:77.8px;top:164.8px" width="9" height="5.6" viewBox="0 0 9 5.6" fill="none" stroke="#d8d8d8" stroke-width="1.1"><path d="M0.4 0.6L4.5 4.8L8.6 0.6"/></svg>
<div class="a" style="left:99.1px;top:162.0px;width:2.2px;height:2.2px;background:#e8e8e8;border-radius:1.1px"></div>
<div class="a" style="left:99.1px;top:165.4px;width:2.2px;height:2.2px;background:#e8e8e8;border-radius:1.1px"></div>
<div class="a" style="left:99.1px;top:168.8px;width:2.2px;height:2.2px;background:#e8e8e8;border-radius:1.1px"></div>
<svg style="left:114px;top:162px" width="10" height="10" viewBox="0 0 10 10" fill="none" stroke="#6e6e6e" stroke-width="1"><path d="M0.5 0.5L9.5 9.5M9.5 0.5L0.5 9.5"/></svg>
<svg style="left:133px;top:162.4px" width="13" height="9" viewBox="0 0 13 9" fill="none" stroke="#6e6e6e" stroke-width="1"><path d="M0.5 4.8L4.2 8.4L12.5 0.5"/></svg>
<svg style="left:698.4px;top:162.6px" width="8.4" height="5" viewBox="0 0 8.4 5" fill="none" stroke="#f2f2f2" stroke-width="1.1"><path d="M0.4 4.6L4.2 0.8L8 4.6"/></svg>

<!-- ===== sheet bar icons ===== -->
<svg style="left:17.6px;top:488.2px" width="5" height="8.6" viewBox="0 0 5 8.6" fill="none" stroke="#8c8c8c" stroke-width="1.1"><path d="M4.5 0.4L0.7 4.3L4.5 8.2"/></svg>
<svg style="left:45px;top:488.2px" width="5" height="8.6" viewBox="0 0 5 8.6" fill="none" stroke="#8c8c8c" stroke-width="1.1"><path d="M0.5 0.4L4.3 4.3L0.5 8.2"/></svg>
<svg style="left:297.4px;top:487.7px" width="9.4" height="9.6" viewBox="0 0 9.4 9.6" fill="none" stroke="#e4e4e4" stroke-width="1.3"><path d="M4.7 0V9.6M0 4.8H9.4"/></svg>
<div class="a" style="left:431.4px;top:489.4px;width:2.2px;height:2.2px;background:#e8e8e8;border-radius:1.1px"></div>
<div class="a" style="left:431.4px;top:492.8px;width:2.2px;height:2.2px;background:#e8e8e8;border-radius:1.1px"></div>
<div class="a" style="left:431.4px;top:496.2px;width:2.2px;height:2.2px;background:#e8e8e8;border-radius:1.1px"></div>

<!-- ===== status bar icons ===== -->
<svg style="left:47.2px;top:511.2px" width="13" height="11.4" viewBox="0 0 13 11.4" fill="none" stroke="#e6e6e6" stroke-width="1.1" stroke-linejoin="round">
 <path d="M5 9.6H0.6V0.6H12.2V3.8"/><rect x="0.6" y="0.6" width="11.6" height="2.2" fill="#bdbdbd" stroke="none"/><path d="M2.2 5H4.8M2.2 7.2H4.2" stroke-width="1"/><circle cx="8.9" cy="7.4" r="3.1"/><circle cx="8.9" cy="7.4" r="1.1" fill="#e6e6e6" stroke="none"/>
</svg>
<svg style="left:74.2px;top:510.4px" width="12.4" height="12.4" viewBox="0 0 12.4 12.4" fill="none" stroke="#ececec" stroke-width="1.15" stroke-linecap="round" stroke-linejoin="round">
 <circle cx="5.2" cy="1.8" r="1.25"/><path d="M0.8 3.6L3.7 4.8H6.7L9.6 3.6"/><path d="M3.7 4.8V7.4L1.9 11.6M6.7 4.8V6.4"/><path d="M5.2 7.6L5.8 8.8"/>
 <path d="M7.4 7.8L11.8 11.8M11.8 7.8L7.4 11.8" stroke-width="1.2"/>
</svg>
<!-- view buttons -->
<svg style="left:465px;top:510.8px" width="11.4" height="10.6" viewBox="0 0 11.4 10.6" fill="none" stroke="#f2f2f2" stroke-width="1"><rect x="0.5" y="0.5" width="10.4" height="9.6"/><path d="M4 0.5V10.1M7.5 0.5V10.1M0.5 3.7H10.9M0.5 6.9H10.9"/></svg>
<svg style="left:499.3px;top:510.8px" width="12.4" height="10.6" viewBox="0 0 12.4 10.6" fill="none" stroke="#f2f2f2" stroke-width="1"><rect x="0.5" y="0.5" width="11.4" height="9.6"/><rect x="3.4" y="2.8" width="5.6" height="5.4"/><path d="M5 4.8H7.4M5 6.4H7.4" stroke-width="0.7"/></svg>
<svg style="left:533.8px;top:510.8px" width="12.4" height="10.6" viewBox="0 0 12.4 10.6" fill="none" stroke="#f2f2f2" stroke-width="1"><rect x="0.5" y="0.5" width="11.4" height="9.6"/><path d="M4.2 0.5V5.6H8.4V0.5" stroke-width="1.2"/></svg>
<div class="a" style="left:561.3px;top:516.3px;width:6.7px;height:1px;background:#d0d0d0"></div>
<svg style="left:661.8px;top:513.4px" width="6.6" height="6.6" viewBox="0 0 6.6 6.6" fill="none" stroke="#d0d0d0" stroke-width="1"><path d="M3.3 0V6.6M0 3.3H6.6"/></svg>


<span id="t0" class="t" style="left:459.65px;top:11.00px;font-size:10.8px;color:#e6e6e6;font-weight:400;font-style:normal;transform:scaleX(0.9299);">Book2</span>
<span id="t1" class="t" style="left:494.95px;top:11.00px;font-size:10.8px;color:#e6e6e6;font-weight:400;font-style:normal;transform:scaleX(1.0000);">-</span>
<span id="t2" class="t" style="left:504.36px;top:11.00px;font-size:10.8px;color:#e6e6e6;font-weight:400;font-style:normal;transform:scaleX(0.8403);">Excel</span>
<span id="t3" class="t" style="left:307.71px;top:12.00px;font-size:10.8px;color:#f2f2f2;font-weight:400;font-style:normal;transform:scaleX(0.8791);">ab</span>
<span id="t4" class="t" style="left:15.50px;top:45.00px;font-size:11.5px;color:#ffffff;font-weight:400;font-style:normal;transform:scaleX(0.9457);">File</span>
<span id="t5" class="t" style="left:54.67px;top:45.00px;font-size:11.5px;color:#ffffff;font-weight:400;font-style:normal;transform:scaleX(0.9647);">Insert</span>
<span id="t6" class="t" style="left:100.13px;top:45.00px;font-size:11.5px;color:#ffffff;font-weight:700;font-style:normal;transform:scaleX(1.0188);">Home</span>
<span id="t7" class="t" style="left:147.12px;top:45.00px;font-size:11.5px;color:#ffffff;font-weight:400;font-style:normal;transform:scaleX(0.9767);">Draw</span>
<span id="t8" class="t" style="left:190.25px;top:45.00px;font-size:11.5px;color:#ffffff;font-weight:400;font-style:normal;transform:scaleX(0.9388);">Page Layout</span>
<span id="t9" class="t" style="left:268.22px;top:45.00px;font-size:11.5px;color:#ffffff;font-weight:400;font-style:normal;transform:scaleX(0.9690);">Formulas</span>
<span id="t10" class="t" style="left:330.30px;top:45.00px;font-size:11.5px;color:#ffffff;font-weight:400;font-style:normal;transform:scaleX(0.9507);">Data</span>
<span id="t11" class="t" style="left:368.88px;top:45.00px;font-size:11.5px;color:#ffffff;font-weight:400;font-style:normal;transform:scaleX(0.9160);">Review</span>
<span id="t12" class="t" style="left:420.98px;top:45.00px;font-size:11.5px;color:#ffffff;font-weight:400;font-style:normal;transform:scaleX(0.9538);">View</span>
<span id="t13" class="t" style="left:461.23px;top:45.00px;font-size:11.5px;color:#ffffff;font-weight:400;font-style:normal;transform:scaleX(0.9812);">Developer</span>
<span id="t14" class="t" style="left:529.48px;top:45.00px;font-size:11.5px;color:#ffffff;font-weight:400;font-style:normal;transform:scaleX(1.0370);">Help</span>
<span id="t15" class="t" style="left:665.53px;top:45.00px;font-size:11px;color:#0f3d20;font-weight:400;font-style:normal;transform:scaleX(0.9428);">Share</span>
<span id="t16" class="t" style="left:19.85px;top:100.00px;font-size:10.8px;color:#ffffff;font-weight:400;font-style:normal;transform:scaleX(0.8773);">Paste</span>
<span id="t17" class="t" style="left:23.66px;top:135.00px;font-size:9.2px;color:#ffffff;font-weight:400;font-style:normal;transform:scaleX(0.9944);">Clipboard</span>
<span id="t18" class="t" style="left:101.19px;top:72.00px;font-size:10.3px;color:#ffffff;font-weight:400;font-style:normal;transform:scaleX(0.9874);">Calibri</span>
<span id="t19" class="t" style="left:190.18px;top:72.00px;font-size:10.3px;color:#ffffff;font-weight:400;font-style:normal;transform:scaleX(0.8604);">14</span>
<span id="t20" class="t" style="left:106.44px;top:93.00px;font-size:11px;color:#e8e8e8;font-weight:700;font-style:normal;transform:scaleX(0.9200);">B</span>
<span id="t21" class="t sf" style="left:129.65px;top:91.00px;font-size:13.5px;color:#e8e8e8;font-weight:400;font-style:italic;transform:scaleX(1.0000);">I</span>
<span id="t22" class="t" style="left:150.32px;top:92.00px;font-size:11px;color:#e8e8e8;font-weight:400;font-style:normal;transform:scaleX(0.9500);">U</span>
<span id="t23" class="t" style="left:185.19px;top:89.00px;font-size:15px;color:#e8e8e8;font-weight:400;font-style:normal;transform:scaleX(0.9700);">A</span>
<span id="t24" class="t" style="left:208.78px;top:92.00px;font-size:12.5px;color:#e8e8e8;font-weight:400;font-style:normal;transform:scaleX(1.0000);">A</span>
<span id="t25" class="t" style="left:178.32px;top:112.00px;font-size:12.3px;color:#e8e8e8;font-weight:400;font-style:normal;transform:scaleX(0.9700);">A</span>
<span id="t26" class="t" style="left:144.82px;top:135.00px;font-size:9.2px;color:#ffffff;font-weight:400;font-style:normal;transform:scaleX(0.9874);">Font</span>
<span id="t27" class="t" style="left:237.40px;top:97.00px;font-size:11px;color:#ffffff;font-weight:400;font-style:normal;transform:scaleX(0.9572);">Alignment</span>
<span id="t28" class="t" style="left:298.96px;top:97.00px;font-size:11px;color:#ffffff;font-weight:400;font-style:normal;transform:scaleX(0.9452);">Number</span>
<span id="t29" class="t" style="left:371.07px;top:71.00px;font-size:10.5px;color:#ffffff;font-weight:400;font-style:normal;transform:scaleX(0.9944);">Conditional Formatting</span>
<span id="t30" class="t" style="left:371.22px;top:93.00px;font-size:10.5px;color:#ffffff;font-weight:400;font-style:normal;transform:scaleX(0.9513);">Format as Table</span>
<span id="t31" class="t" style="left:371.13px;top:115.00px;font-size:10.5px;color:#ffffff;font-weight:400;font-style:normal;transform:scaleX(0.9080);">Cell Styles</span>
<span id="t32" class="t" style="left:410.19px;top:135.00px;font-size:9.2px;color:#ffffff;font-weight:400;font-style:normal;transform:scaleX(0.9278);">Styles</span>
<span id="t33" class="t" style="left:512.97px;top:97.00px;font-size:11px;color:#ffffff;font-weight:400;font-style:normal;transform:scaleX(0.8354);">Cells</span>
<span id="t34" class="t" style="left:552.71px;top:97.00px;font-size:11px;color:#ffffff;font-weight:400;font-style:normal;transform:scaleX(0.9569);">Editing</span>
<span id="t35" class="t" style="left:601.52px;top:99.00px;font-size:11.5px;color:#ffffff;font-weight:400;font-style:normal;transform:scaleX(0.9045);">Add-ins</span>
<span id="t36" class="t" style="left:604.19px;top:135.00px;font-size:9.2px;color:#ffffff;font-weight:400;font-style:normal;transform:scaleX(0.9680);">Add-ins</span>
<span id="t37" class="t" style="left:7.87px;top:161.00px;font-size:13.3px;color:#ffffff;font-weight:400;font-style:normal;transform:scaleX(1.0585);">B4</span>
<span id="t38" class="t" style="left:184.98px;top:162.00px;font-size:13.5px;color:#ffffff;font-weight:400;font-style:normal;transform:scaleX(1.0072);">=SHEET(Sheet6!B3)</span>
<span id="t39" class="t sf" style="left:154.46px;top:158.00px;font-size:15.5px;color:#e4e4e4;font-weight:400;font-style:italic;transform:scaleX(1.0800);-webkit-text-stroke:0;">fx</span>
<span id="t40" class="t" style="left:58.73px;top:210.00px;font-size:14px;color:#ffffff;font-weight:400;font-style:normal;transform:scaleX(1.0000);">A</span>
<span id="t41" class="t" style="left:155.66px;top:210.00px;font-size:14px;color:#ffffff;font-weight:400;font-style:normal;transform:scaleX(0.9300);">B</span>
<span id="t42" class="t" style="left:252.39px;top:210.00px;font-size:14px;color:#ffffff;font-weight:400;font-style:normal;transform:scaleX(0.9300);">C</span>
<span id="t43" class="t" style="left:325.29px;top:210.00px;font-size:14px;color:#ffffff;font-weight:400;font-style:normal;transform:scaleX(0.9300);">D</span>
<span id="t44" class="t" style="left:398.26px;top:210.00px;font-size:14px;color:#ffffff;font-weight:400;font-style:normal;transform:scaleX(0.9300);">E</span>
<span id="t45" class="t" style="left:471.09px;top:210.00px;font-size:14px;color:#ffffff;font-weight:400;font-style:normal;transform:scaleX(0.9300);">F</span>
<span id="t46" class="t" style="left:543.74px;top:210.00px;font-size:14px;color:#ffffff;font-weight:400;font-style:normal;transform:scaleX(0.9300);">G</span>
<span id="t47" class="t" style="left:617.29px;top:210.00px;font-size:14px;color:#ffffff;font-weight:400;font-style:normal;transform:scaleX(0.9300);">H</span>
<span id="t48" class="t" style="left:692.55px;top:210.00px;font-size:14px;color:#ffffff;font-weight:400;font-style:normal;transform:scaleX(1.0000);">I</span>
<span id="t49" class="t" style="left:7.68px;top:231.00px;font-size:14px;color:#ffffff;font-weight:400;font-style:normal;transform:scaleX(1.1200);">1</span>
<span id="t50" class="t" style="left:7.68px;top:252.00px;font-size:14px;color:#ffffff;font-weight:400;font-style:normal;transform:scaleX(1.1200);">2</span>
<span id="t51" class="t" style="left:7.68px;top:273.00px;font-size:14px;color:#ffffff;font-weight:400;font-style:normal;transform:scaleX(1.1200);">3</span>
<span id="t52" class="t" style="left:7.68px;top:294.00px;font-size:14px;color:#ffffff;font-weight:400;font-style:normal;transform:scaleX(1.1200);">4</span>
<span id="t53" class="t" style="left:7.68px;top:315.00px;font-size:14px;color:#ffffff;font-weight:400;font-style:normal;transform:scaleX(1.1200);">5</span>
<span id="t54" class="t" style="left:7.68px;top:336.00px;font-size:14px;color:#ffffff;font-weight:400;font-style:normal;transform:scaleX(1.1200);">6</span>
<span id="t55" class="t" style="left:7.68px;top:357.00px;font-size:14px;color:#ffffff;font-weight:400;font-style:normal;transform:scaleX(1.1200);">7</span>
<span id="t56" class="t" style="left:7.68px;top:378.00px;font-size:14px;color:#ffffff;font-weight:400;font-style:normal;transform:scaleX(1.1200);">8</span>
<span id="t57" class="t" style="left:7.68px;top:400.00px;font-size:14px;color:#ffffff;font-weight:400;font-style:normal;transform:scaleX(1.1200);">9</span>
<span id="t58" class="t" style="left:3.63px;top:421.00px;font-size:14px;color:#ffffff;font-weight:400;font-style:normal;transform:scaleX(1.0692);">10</span>
<span id="t59" class="t" style="left:3.82px;top:442.00px;font-size:14px;color:#ffffff;font-weight:400;font-style:normal;transform:scaleX(1.1639);">11</span>
<span id="t60" class="t" style="left:3.83px;top:463.00px;font-size:14px;color:#ffffff;font-weight:400;font-style:normal;transform:scaleX(1.0776);">12</span>
<span id="t61" class="t" style="left:101.84px;top:231.00px;font-size:14px;color:#3b1d08;font-weight:400;font-style:normal;transform:scaleX(1.0288);">Sheet Number</span>
<span id="t62" class="t" style="left:209.73px;top:252.00px;font-size:14.3px;color:#111;font-weight:400;font-style:normal;transform:scaleX(1.1000);">3</span>
<span id="t63" class="t" style="left:209.73px;top:273.00px;font-size:14.3px;color:#111;font-weight:400;font-style:normal;transform:scaleX(1.1000);">2</span>
<span id="t64" class="t" style="left:142.96px;top:294.00px;font-size:14.3px;color:#111;font-weight:400;font-style:normal;transform:scaleX(1.0480);">#N/A</span>
<span id="t65" class="t" style="left:98.64px;top:489.00px;font-size:12.3px;color:#ffffff;font-weight:400;font-style:normal;transform:scaleX(0.9223);">Sheet1</span>
<span id="t66" class="t" style="left:155.68px;top:489.00px;font-size:12.3px;color:#ffffff;font-weight:400;font-style:normal;transform:scaleX(0.9328);">Sheet2</span>
<span id="t67" class="t" style="left:212.90px;top:486.00px;font-size:12px;color:#1f1f1f;font-weight:400;font-style:normal;transform:scaleX(0.9883);">Sheet3</span>
<span id="t68" class="t" style="left:7.38px;top:513.00px;font-size:8.5px;color:#e8e8e8;font-weight:400;font-style:normal;transform:scaleX(1.0103);">Ready</span>
<span id="t69" class="t" style="left:89.96px;top:513.00px;font-size:8.5px;color:#f4f4f4;font-weight:700;font-style:normal;transform:scaleX(1.0463);">Accessibility: Investigate</span>
<span id="t70" class="t" style="left:679.48px;top:513.00px;font-size:8.5px;color:#e8e8e8;font-weight:400;font-style:normal;transform:scaleX(1.0235);">100%</span>
</div>
</body></html>
